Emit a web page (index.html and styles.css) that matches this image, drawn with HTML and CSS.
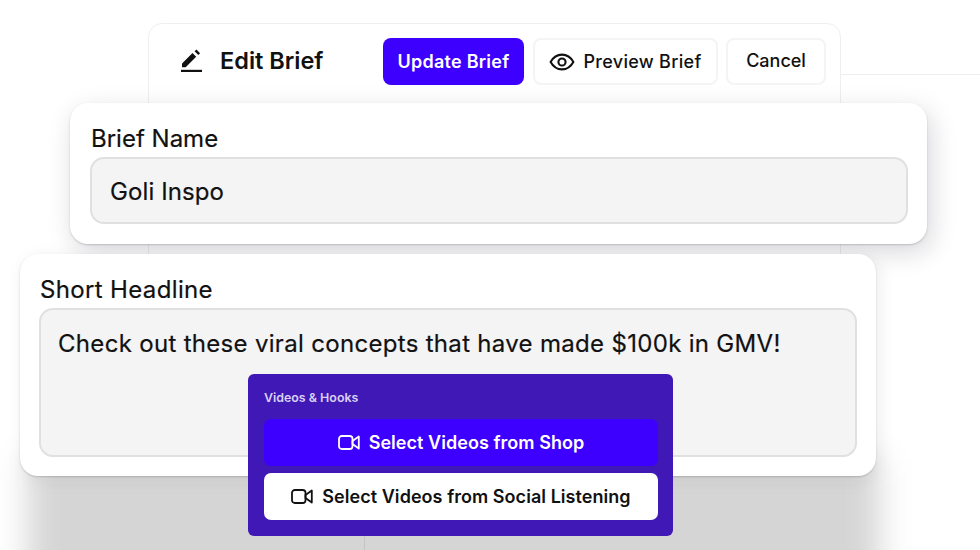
FILE: index.html
```html
<!DOCTYPE html>
<html lang="en">

<head>
    <meta charset="UTF-8">
    <meta name="viewport" content="width=device-width, initial-scale=1.0">
    <title>Edit Brief</title>
    <link rel="stylesheet" href="styles.css">
</head>

<body>
    <div class="stage">
        <div class="line line-right"></div>

        <div class="card header-card">
            <div class="title-group">
                <svg class="pencil-icon" viewBox="0 0 24 24" width="24" height="24">
                    <path d="M1 20.800h21v2.200H1z" fill="#111"/>
                    <path d="M2 18.200v-3.700L12.500 4l3.700 3.700L5.700 18.200z" fill="#111"/>
                    <path d="M14.600 2.300L16.400.5l3.700 3.700-1.800 1.800z" fill="#111"/>
                </svg>
                <h1 class="title">Edit Brief</h1>
            </div>
            <div class="actions">
                <button class="btn btn-primary">Update Brief</button>
                <button class="btn btn-plain btn-preview">
                    <svg viewBox="0 0 24 24" width="26" height="26" fill="none" stroke="#111" stroke-width="1.9">
                        <path d="M1.500 12C4 7.500 7.700 5.200 12 5.200s8 2.300 10.500 6.800c-2.500 4.500-6.200 6.800-10.500 6.800S4 16.500 1.500 12z"/>
                        <circle cx="12" cy="12" r="3.300"/>
                    </svg>
                    Preview Brief
                </button>
                <button class="btn btn-plain btn-cancel">Cancel</button>
            </div>
        </div>

        <div class="card field-card name-card">
            <div class="field-label">Brief Name</div>
            <div class="field-box name-box">Goli Inspo</div>
        </div>

        <div class="card field-card headline-card">
            <div class="field-label">Short Headline</div>
            <div class="field-box headline-box">Check out these viral concepts that have made $100k in GMV!</div>
        </div>

        <div class="line line-bottom"></div>

        <div class="videos-panel">
            <div class="panel-label">Videos &amp; Hooks</div>
            <button class="video-btn video-btn-shop">
                <svg viewBox="0 0 22 16" width="22" height="17" fill="none" stroke="currentColor" stroke-width="1.800" stroke-linejoin="round">
                    <rect x="1" y="1.500" width="13.500" height="13" rx="2.800"/>
                    <path d="M14.500 6.500L20.800 2v12l-6.300-4.500z"/>
                </svg>
                Select Videos from Shop
            </button>
            <button class="video-btn video-btn-social">
                <svg viewBox="0 0 22 16" width="22" height="17" fill="none" stroke="currentColor" stroke-width="1.800" stroke-linejoin="round">
                    <rect x="1" y="1.500" width="13.500" height="13" rx="2.800"/>
                    <path d="M14.500 6.500L20.800 2v12l-6.300-4.500z"/>
                </svg>
                Select Videos from Social Listening
            </button>
        </div>
    </div>
</body>

</html>
```

FILE: styles.css
```css
* {
    box-sizing: border-box;
}

body {
    margin: 0;
    background: #fff;
    color: #111;
    font-family: Inter, "Liberation Sans", sans-serif;
}

/* the cards overlap each other like a collage, so they sit on a free canvas */
.stage {
    position: relative;
    width: 980px;
    height: 550px;
    overflow: hidden;
}

.line {
    position: absolute;
    background: #eeeeee;
}

.line-right {
    left: 840px;
    top: 74px;
    width: 140px;
    height: 1px;
}

.line-bottom {
    left: 364px;
    top: 530px;
    width: 1px;
    height: 20px;
    background: #c4c4c4;
}

.card {
    position: absolute;
    background: #fff;
}

.header-card {
    left: 148px;
    top: 23px;
    width: 693px;
    height: 235px;
    padding: 14px 14px 0 31px;
    display: flex;
    align-items: flex-start;
    justify-content: space-between;
    border: 1px solid #efefef;
    border-radius: 14px 14px 0 0;
}

.title-group {
    display: flex;
    align-items: center;
    gap: 16px;
    height: 45px;
}

.title {
    margin: 0;
    font-size: 23.5px;
    font-weight: 600;
}

.actions {
    display: flex;
    gap: 8px;
}

.btn {
    height: 47px;
    border-radius: 8px;
    font-family: inherit;
    font-size: 18px;
    font-weight: 500;
    display: flex;
    align-items: center;
    justify-content: center;
}

.btn-primary {
    width: 141px;
    margin-right: 1px;
    padding: 0;
    background: #3d00ff;
    border: none;
    color: #fff;
    font-weight: 600;
    letter-spacing: 0.25px;
}

.btn-plain {
    background: #fff;
    border: 2px solid #f4f4f4;
    color: #111;
}

.btn-preview {
    width: 185px;
    gap: 8px;
    padding: 0;
    letter-spacing: 0.3px;
}

.btn-cancel {
    width: 100px;
    padding: 0 0 3px;
}

.field-card {
    border-radius: 18px;
}

.name-card {
    left: 70px;
    top: 103px;
    width: 857px;
    height: 141px;
    padding: 21px 19px 0 20px;
    box-shadow: 0 1px 2px rgba(0, 0, 0, 0.18), 4px 8px 26px rgba(20, 20, 40, 0.17);
}

.headline-card {
    left: 20px;
    top: 254px;
    width: 856px;
    height: 222px;
    padding: 21px 19px 0 19px;
    box-shadow: 0 1px 2px rgba(0, 0, 0, 0.18), 3px 4px 18px rgba(20, 20, 40, 0.08);
}

/* big flat shadow that runs off the bottom of the page */
.headline-card::after {
    content: "";
    position: absolute;
    left: 8px;
    right: -3px;
    top: 205px;
    height: 160px;
    background: rgba(0, 0, 0, 0.165);
    filter: blur(16px);
    z-index: -1;
}

.field-label {
    padding-left: 1px;
    font-size: 24px;
    line-height: 29px;
    font-weight: 400;
    -webkit-text-stroke: 0.2px #111;
}

.headline-card .field-label {
    letter-spacing: 0.35px;
}

.field-box {
    margin-top: 4px;
    background: #f4f4f4;
    border: 2px solid #e0e0e0;
    border-radius: 14px;
    font-size: 24px;
    padding-left: 18px;
    -webkit-text-stroke: 0.2px #111;
}

.name-box {
    height: 67px;
    line-height: 66px;
    letter-spacing: 0.1px;
}

.headline-box {
    height: 149px;
    padding-top: 19px;
    padding-left: 17px;
    line-height: 30px;
    letter-spacing: 0.31px;
}

.videos-panel {
    position: absolute;
    left: 248px;
    top: 374px;
    width: 425px;
    height: 162px;
    padding: 16px 15px 0 16px;
    background: #3f18b5;
    border-radius: 6px;
}

.panel-label {
    color: #d9d0f5;
    font-size: 12.4px;
    font-weight: 600;
    line-height: 16px;
    margin-bottom: 13px;
}

.video-btn {
    width: 394px;
    height: 47px;
    margin-bottom: 7px;
    padding: 0;
    border: none;
    border-radius: 7px;
    display: flex;
    align-items: center;
    justify-content: center;
    gap: 9px;
    font-family: inherit;
    font-size: 18px;
    font-weight: 600;
    letter-spacing: 0.05px;
}

.video-btn-shop {
    background: #3d00ff;
    color: #fff;
}

.video-btn-social {
    background: #fff;
    color: #111;
}
```
